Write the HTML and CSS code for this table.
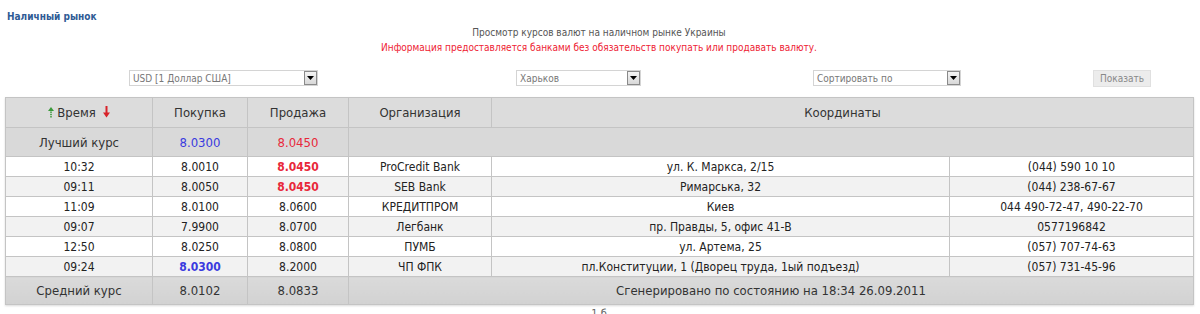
FILE: index.html
```html
<!DOCTYPE html>
<html lang="ru">
<head>
<meta charset="utf-8">
<title>Наличный рынок</title>
<link rel="stylesheet" href="styles.css">
</head>
<body>
<div class="page">
  <div class="title">Наличный рынок</div>
  <div class="intro">
    <div class="intro-gray">Просмотр курсов валют на наличном рынке Украины</div>
    <div class="intro-red">Информация предоставляется банками без обязательств покупать или продавать валюту.</div>
  </div>
  <div class="filters">
    <div class="select sel-currency"><span class="sel-text">USD [1 Доллар США]</span><span class="sel-btn"><svg width="7" height="4" viewBox="0 0 7 4"><path d="M0 0H7L3.5 4Z" fill="#000"/></svg></span></div>
    <div class="select sel-city"><span class="sel-text">Харьков</span><span class="sel-btn"><svg width="7" height="4" viewBox="0 0 7 4"><path d="M0 0H7L3.5 4Z" fill="#000"/></svg></span></div>
    <div class="select sel-sort"><span class="sel-text">Сортировать по</span><span class="sel-btn"><svg width="7" height="4" viewBox="0 0 7 4"><path d="M0 0H7L3.5 4Z" fill="#000"/></svg></span></div>
    <div class="show-btn">Показать</div>
  </div>
  <table class="rates">
    <colgroup>
      <col class="c1"><col class="c2"><col class="c3"><col class="c4"><col class="c5"><col class="c6">
    </colgroup>
    <tr class="head">
      <td><span class="sort"><svg class="arr" width="6" height="11" viewBox="0 0 6 11"><path d="M3 0L6 4H0Z" fill="#3a9a3a"/><rect x="2.2" y="4.5" width="1.6" height="1.4" fill="#3a9a3a"/><rect x="2.2" y="6.8" width="1.6" height="1.4" fill="#3a9a3a"/><rect x="2.2" y="9.1" width="1.6" height="1.4" fill="#3a9a3a"/></svg> Время <svg class="arr arr-down" width="7" height="12" viewBox="0 0 7 12"><rect x="2.5" y="0" width="2" height="7" fill="#d8232a"/><path d="M0 6.5H7L3.5 11.5Z" fill="#d8232a"/></svg></span></td>
      <td>Покупка</td>
      <td>Продажа</td>
      <td>Организация</td>
      <td colspan="2">Координаты</td>
    </tr>
    <tr class="best">
      <td>Лучший курс</td>
      <td class="blue">8.0300</td>
      <td class="red">8.0450</td>
      <td colspan="3"></td>
    </tr>
    <tr class="row odd">
      <td>10:32</td><td>8.0010</td><td class="red b">8.0450</td><td>ProCredit Bank</td><td>ул. К. Маркса, 2/15</td><td>(044) 590 10 10</td>
    </tr>
    <tr class="row even">
      <td>09:11</td><td>8.0050</td><td class="red b">8.0450</td><td>SEB Bank</td><td>Римарська, 32</td><td>(044) 238-67-67</td>
    </tr>
    <tr class="row odd">
      <td>11:09</td><td>8.0100</td><td>8.0600</td><td>КРЕДИТПРОМ</td><td>Киев</td><td>044 490-72-47, 490-22-70</td>
    </tr>
    <tr class="row even">
      <td>09:07</td><td>7.9900</td><td>8.0700</td><td>Легбанк</td><td>пр. Правды, 5, офис 41-В</td><td>0577196842</td>
    </tr>
    <tr class="row odd">
      <td>12:50</td><td>8.0250</td><td>8.0800</td><td>ПУМБ</td><td>ул. Артема, 25</td><td>(057) 707-74-63</td>
    </tr>
    <tr class="row even">
      <td>09:24</td><td class="blue b">8.0300</td><td>8.2000</td><td>ЧП ФПК</td><td>пл.Конституции, 1 (Дворец труда, 1ый подъезд)</td><td>(057) 731-45-96</td>
    </tr>
    <tr class="avg">
      <td>Средний курс</td>
      <td>8.0102</td>
      <td>8.0833</td>
      <td colspan="3">Сгенерировано по состоянию на 18:34 26.09.2011</td>
    </tr>
  </table>
  <div class="pager">1 б</div>
</div>
</body>
</html>
```

FILE: styles.css
```css
html, body {
  margin: 0;
  padding: 0;
  background: #fff;
}
body {
  font-family: Tahoma, "DejaVu Sans Condensed", "DejaVu Sans", sans-serif;
  color: #333;
}
.page {
  padding: 10px 7px 0 5px;
}
.title {
  font-size: 10px;
  font-weight: bold;
  color: #2f5b95;
  padding-left: 2px;
  line-height: 14px;
}
.intro {
  text-align: center;
  font-size: 10px;
  line-height: 15px;
  margin-top: 1px;
}
.intro-gray {
  color: #555;
}
.intro-red {
  color: #ee2233;
}
.filters {
  display: flex;
  align-items: center;
  height: 18px;
  margin-top: 14px;
  font-size: 10px;
}
.select {
  display: flex;
  align-items: center;
  height: 16px;
  box-sizing: border-box;
  border: 1px solid #d4d4d4;
  background: #fff;
  color: #777;
}
.sel-text {
  flex: 1;
  padding-left: 3px;
  white-space: nowrap;
  overflow: hidden;
}
.sel-btn {
  width: 13px;
  height: 14px;
  box-sizing: border-box;
  border: 1px solid #8a8a8a;
  background: linear-gradient(#f4f4f4, #d8d8d8);
  display: flex;
  align-items: center;
  justify-content: center;
}
.sel-currency {
  margin-left: 124px;
  width: 189px;
}
.sel-city {
  margin-left: 198px;
  width: 125px;
}
.sel-sort {
  margin-left: 172px;
  width: 148px;
}
.show-btn {
  margin-left: 132px;
  width: 58px;
  height: 17px;
  box-sizing: border-box;
  border: 1px solid #e0e0e0;
  background: #ececec;
  color: #888;
  display: flex;
  align-items: center;
  justify-content: center;
}
.rates {
  margin-top: 10px;
  width: 1188px;
  border-collapse: collapse;
  table-layout: fixed;
  font-size: 12px;
  color: #222;
  box-shadow: 0 1px 2px rgba(0,0,0,0.15);
}
.c1 { width: 147px; }
.c2 { width: 95px; }
.c3 { width: 101px; }
.c4 { width: 143px; }
.c5 { width: 458px; }
.c6 { width: 244px; }
.rates td {
  border: 1px solid #c4c4c4;
  text-align: center;
  padding: 0 4px;
  white-space: nowrap;
  overflow: hidden;
}
.head td {
  height: 29px;
  background: #dcdcdc;
  font-size: 13px;
  color: #333;
}
.best td {
  height: 28px;
  background: #d9d9d9;
  font-size: 13px;
  color: #333;
}
.row td {
  height: 19px;
  font-size: 12px;
}
.odd td {
  background: #fff;
}
.even td {
  background: #f2f2f2;
}
.avg td {
  height: 27px;
  background: linear-gradient(#dadada, #d2d2d2);
  font-size: 13px;
  color: #333;
}
.blue {
  color: #3a3adf !important;
}
.red {
  color: #e8283a !important;
}
.b {
  font-weight: bold;
}
.sort {
  display: inline-flex;
  align-items: center;
  gap: 3px;
}
.arr-down {
  margin-left: 4px;
}
.pager {
  text-align: center;
  font-size: 11px;
  color: #666;
  margin-top: 2px;
  line-height: 14px;
}
```
